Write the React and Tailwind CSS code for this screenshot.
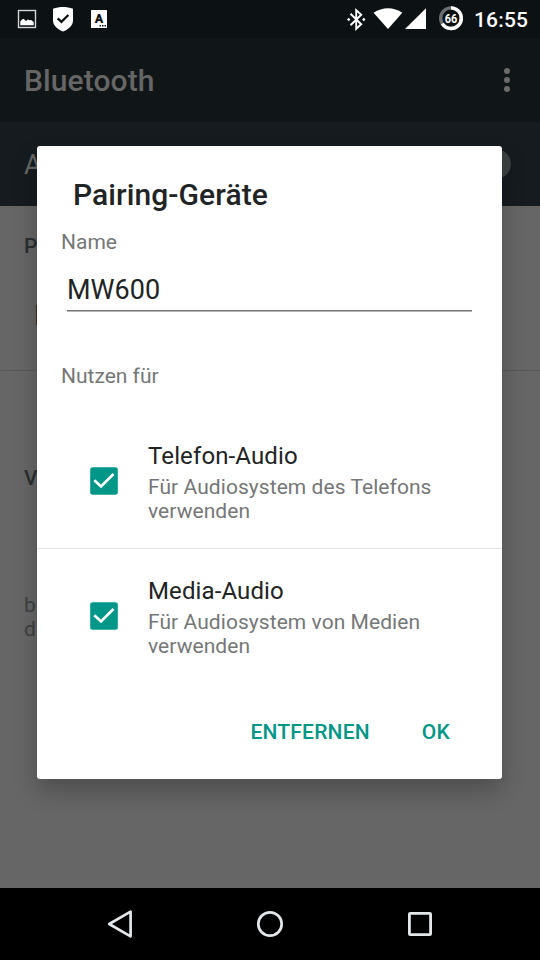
import React, { useState } from 'react';

const profiles = [
  { id: 'phone', title: 'Telefon-Audio', lines: ['Für Audiosystem des Telefons', 'verwenden'] },
  { id: 'media', title: 'Media-Audio', lines: ['Für Audiosystem von Medien', 'verwenden'] }
];

function StatusBar() {
  return (
    <div className="h-[38px] bg-[#0c1113] text-white">
      <svg className="block" width="540" height="38" viewBox="0 0 540 38" fill="none">
        {/* picture */}
        <rect x="18.5" y="10.5" width="17" height="17" stroke="#d4d7d8" strokeWidth="1.4" />
        <path d="M20.300 21.500l1.700-2 1.500-.8 2.500 2.300 2-1.500 1.500.8 1.500-.3 2.700 2v3.300H20.300z" fill="#fff" />
        {/* shield */}
        <path d="M63 7c3.400 0 6.800.6 10 1.800v11.700c0 5.500-5 9-10 11-5-2-10-5.500-10-11V8.800C56.200 7.600 59.600 7 63 7z" fill="#fff" />
        <path d="M57.700 18.300l3.700 3.500 7-6.800" stroke="#0c1113" strokeWidth="2.300" />
        {/* keyboard */}
        <rect x="91" y="10" width="16" height="18" rx="0.5" fill="#fff" />
        <text x="98.900" y="22.900" textAnchor="middle" fontSize="12.500" fontWeight="900" fontFamily="Roboto, sans-serif" fill="#0c1113">A</text>
        <path d="M99.500 25.800h1.500M102 25.800h1.500M104.500 25.800h1.500" stroke="#0c1113" strokeWidth="1.500" />
        {/* bluetooth */}
        <path d="M350.500 13.800l10.700 10.400-5 4.600V10.200l5 4.600-10.700 10.400" stroke="#fff" strokeWidth="1.900" />
        <path d="M348.700 17.800l1.700 1.700-1.700 1.700-1.700-1.700zM363.800 17.800l1.700 1.700-1.700 1.700-1.700-1.700z" fill="#fff" />
        {/* wifi and signal */}
        <path d="M373.600 12.700C378 9.700 383 8.200 388 8.200s10 1.500 14.300 4.500L388 29z" fill="#fff" />
        <path d="M426 8.200V29h-21z" fill="#fff" />
        {/* battery */}
        <circle cx="451" cy="18.200" r="10.300" stroke="#6b6e6f" strokeWidth="3.400" />
        <circle cx="451" cy="18.200" r="10.300" stroke="#fff" strokeWidth="3.400" pathLength="100" strokeDasharray="66 34" transform="rotate(-90 451 18.200)" />
        <text x="451" y="22.800" textAnchor="middle" fontSize="12.500" fontWeight="700" textLength="12.500" lengthAdjust="spacingAndGlyphs" fontFamily="Roboto, sans-serif" fill="#fff">66</text>
        <text x="474" y="27" fontSize="21" fontWeight="500" textLength="54" fontFamily="Roboto, sans-serif" fill="#fff">16:55</text>
      </svg>
    </div>
  );
}

function SettingsPage() {
  return (
    <div className="flex-1 flex flex-col bg-[#666666] text-[#2a2f31]">
      <div className="h-[84px] flex items-center justify-between pl-6 pr-[30px] bg-[#101517]">
        <h1 className="pt-0.5 text-[30px] leading-10 font-medium tracking-[0.1px] text-[#666666]">Bluetooth</h1>
        <div className="flex flex-col gap-[3px]">
          <span className="size-1.5 rounded-full bg-[#6b6b6b]" />
          <span className="size-1.5 rounded-full bg-[#6b6b6b]" />
          <span className="size-1.5 rounded-full bg-[#6b6b6b]" />
        </div>
      </div>
      <div className="h-[84px] flex items-center justify-between pl-6 pr-[29px] bg-[#151b1f]">
        <span className="pt-0.5 text-[27px] text-[#666666]">A</span>
        <span className="size-[30px] rounded-full bg-[#3c4142]" />
      </div>

      <div className="h-[165px] border-b border-[#595959] pt-7">
        <h2 className="pl-6 text-[21px] leading-6 font-medium">P</h2>
        <p className="pl-[34px] pt-[42px] text-[27px] leading-8 text-[#1c1f20]">M</p>
      </div>
      <h2 className="pl-6 pt-[95px] text-[21px] leading-6 font-medium">V</h2>
      <p className="pl-6 pt-[103px] text-[21px] leading-6 text-[#3c4142]">
        b<br />
        d
      </p>
    </div>
  );
}

function NavBar() {
  return (
    <div className="h-[72px] flex items-center justify-center gap-[114px] bg-black">
      <svg width="36" height="36" viewBox="0 0 36 36" fill="none" stroke="#e3e7e9" strokeWidth="2.700" strokeLinejoin="round">
        <path d="M7.200 18l21.400-12.300v24.600z" />
      </svg>
      <svg width="36" height="36" viewBox="0 0 36 36" fill="none" stroke="#e3e7e9" strokeWidth="2.700">
        <circle cx="18" cy="18" r="11.700" />
      </svg>
      <svg width="36" height="36" viewBox="0 0 36 36" fill="none" stroke="#e3e7e9" strokeWidth="2.800">
        <rect x="7.400" y="7.400" width="21.200" height="21.200" rx="0.800" />
      </svg>
    </div>
  );
}

function ProfileRow({ profile, checked, onToggle }) {
  return (
    <button className="w-full h-[135px] pb-px flex items-center pl-[53px] text-left" onClick={onToggle}>
      <svg className="mr-[30px] shrink-0" width="28" height="28" viewBox="0 0 28 28" fill="none">
        <rect x="0.200" y="0.200" width="27.600" height="27.600" rx="2.500" fill={checked ? '#009688' : '#757575'} />
        {checked
          ? <path d="M4.300 13.300l6.700 6.200L23.500 7" stroke="#fff" strokeWidth="2.700" />
          : <rect x="3" y="3" width="22" height="22" fill="#fff" />}
      </svg>
      <span className="flex flex-col">
        <span className="pb-0.5 text-2xl leading-[34px] tracking-[0.12px] text-[#212424]">{profile.title}</span>
        {profile.lines.map(line => (
          <span key={line} className="text-[21px] leading-6 tracking-[0.06px] text-[#757777]">{line}</span>
        ))}
      </span>
    </button>
  );
}

export default function App() {
  const [name, setName] = useState('MW600');
  const [enabled, setEnabled] = useState({ phone: true, media: true });

  const toggle = id => setEnabled(prev => ({ ...prev, [id]: !prev[id] }));

  return (
    <div className="relative w-[540px] h-[960px] flex flex-col overflow-hidden font-['Roboto',sans-serif]">
      <StatusBar />
      <SettingsPage />
      <NavBar />

      {/* Dialog */}
      <div className="absolute left-[37px] top-[146px] w-[465px] h-[633px] flex flex-col bg-white rounded-[3px] shadow-[0_12px_24px_rgba(0,0,0,0.24)]">
        <h2 className="pt-[29px] pl-9 text-[30px] leading-10 font-medium tracking-[0.08px] text-[#212424]">Pairing-Geräte</h2>
        <label className="pt-[15px] pl-6 text-[21px] leading-6 text-[#757777]">Name</label>
        <input
          className="mt-[19px] ml-[30px] w-[405px] h-[38px] pb-[3px] border-b border-[#757777] text-[27px] leading-8 text-[#212424] outline-none shadow-[0_1px_0_#b4b6b6]"
          value={name}
          onChange={e => setName(e.target.value)}
        />
        <p className="pt-[53px] pl-6 text-[21px] leading-6 text-[#757777]">Nutzen für</p>
        <div className="mt-[26px] divide-y divide-[#dfe3e3]">
          {profiles.map(p => (
            <ProfileRow key={p.id} profile={p} checked={enabled[p.id]} onToggle={() => toggle(p.id)} />
          ))}
        </div>
        <div className="mt-6 mr-[52px] flex justify-end gap-[52px] text-[21px] leading-12 font-medium tracking-[0.2px] text-[#009688]">
          <button>ENTFERNEN</button>
          <button>OK</button>
        </div>
      </div>
    </div>
  );
}
